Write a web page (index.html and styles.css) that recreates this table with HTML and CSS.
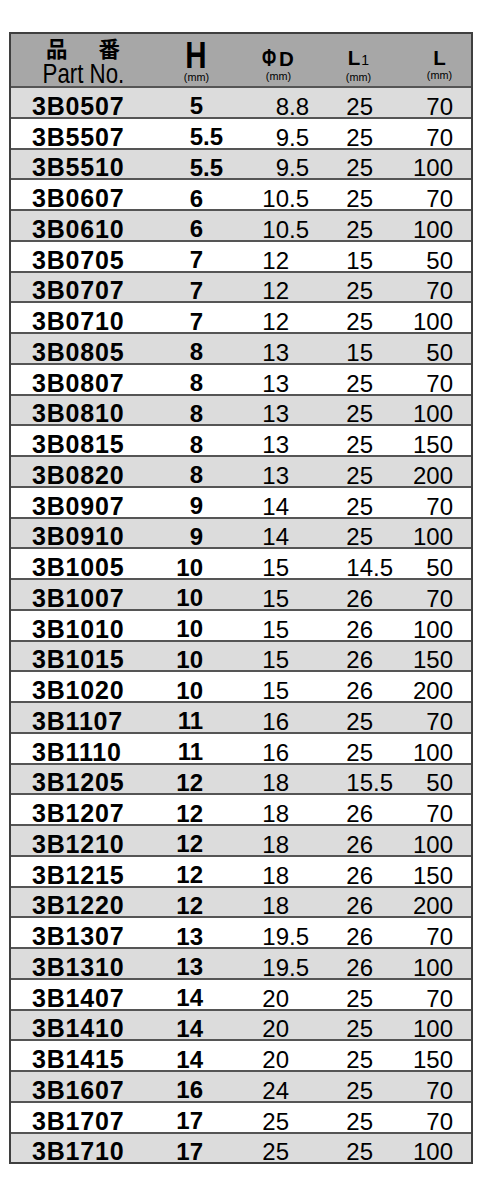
FILE: index.html
```html
<!DOCTYPE html>
<html lang="ja">
<head>
<meta charset="utf-8">
<title>Part list</title>
<link rel="stylesheet" href="styles.css">
</head>
<body>
<div class="sheet">
  <div class="spec">
    <div class="head">
      <div class="hc hc-part">
        <div class="jp"><span>品</span><span>番</span></div>
        <div class="pno">Part No.</div>
      </div>
      <div class="hc hc-h">
        <div class="big">H</div>
        <div class="mm mm-h">(mm)</div>
      </div>
      <div class="hc hc-d">
        <div class="sym"><span class="phi">Φ</span><span class="dd">D</span></div>
        <div class="mm">(mm)</div>
      </div>
      <div class="hc hc-l1">
        <div class="sym">L<span class="sub">1</span></div>
        <div class="mm">(mm)</div>
      </div>
      <div class="hc hc-l">
        <div class="sym">L</div>
        <div class="mm">(mm)</div>
      </div>
    </div>
    <div class="rows">
      <div class="row"><span class="pn">3B0507</span><span class="hi">5</span><span class="hf"></span><span class="vi">8</span><span class="vf">.8</span><span class="vi">25</span><span class="vf"></span><span class="vl">70</span></div>
      <div class="row"><span class="pn">3B5507</span><span class="hi">5</span><span class="hf">.5</span><span class="vi">9</span><span class="vf">.5</span><span class="vi">25</span><span class="vf"></span><span class="vl">70</span></div>
      <div class="row"><span class="pn">3B5510</span><span class="hi">5</span><span class="hf">.5</span><span class="vi">9</span><span class="vf">.5</span><span class="vi">25</span><span class="vf"></span><span class="vl">100</span></div>
      <div class="row"><span class="pn">3B0607</span><span class="hi">6</span><span class="hf"></span><span class="vi">10</span><span class="vf">.5</span><span class="vi">25</span><span class="vf"></span><span class="vl">70</span></div>
      <div class="row"><span class="pn">3B0610</span><span class="hi">6</span><span class="hf"></span><span class="vi">10</span><span class="vf">.5</span><span class="vi">25</span><span class="vf"></span><span class="vl">100</span></div>
      <div class="row"><span class="pn">3B0705</span><span class="hi">7</span><span class="hf"></span><span class="vi">12</span><span class="vf"></span><span class="vi">15</span><span class="vf"></span><span class="vl">50</span></div>
      <div class="row"><span class="pn">3B0707</span><span class="hi">7</span><span class="hf"></span><span class="vi">12</span><span class="vf"></span><span class="vi">25</span><span class="vf"></span><span class="vl">70</span></div>
      <div class="row"><span class="pn">3B0710</span><span class="hi">7</span><span class="hf"></span><span class="vi">12</span><span class="vf"></span><span class="vi">25</span><span class="vf"></span><span class="vl">100</span></div>
      <div class="row"><span class="pn">3B0805</span><span class="hi">8</span><span class="hf"></span><span class="vi">13</span><span class="vf"></span><span class="vi">15</span><span class="vf"></span><span class="vl">50</span></div>
      <div class="row"><span class="pn">3B0807</span><span class="hi">8</span><span class="hf"></span><span class="vi">13</span><span class="vf"></span><span class="vi">25</span><span class="vf"></span><span class="vl">70</span></div>
      <div class="row"><span class="pn">3B0810</span><span class="hi">8</span><span class="hf"></span><span class="vi">13</span><span class="vf"></span><span class="vi">25</span><span class="vf"></span><span class="vl">100</span></div>
      <div class="row"><span class="pn">3B0815</span><span class="hi">8</span><span class="hf"></span><span class="vi">13</span><span class="vf"></span><span class="vi">25</span><span class="vf"></span><span class="vl">150</span></div>
      <div class="row"><span class="pn">3B0820</span><span class="hi">8</span><span class="hf"></span><span class="vi">13</span><span class="vf"></span><span class="vi">25</span><span class="vf"></span><span class="vl">200</span></div>
      <div class="row"><span class="pn">3B0907</span><span class="hi">9</span><span class="hf"></span><span class="vi">14</span><span class="vf"></span><span class="vi">25</span><span class="vf"></span><span class="vl">70</span></div>
      <div class="row"><span class="pn">3B0910</span><span class="hi">9</span><span class="hf"></span><span class="vi">14</span><span class="vf"></span><span class="vi">25</span><span class="vf"></span><span class="vl">100</span></div>
      <div class="row"><span class="pn">3B1005</span><span class="hi">10</span><span class="hf"></span><span class="vi">15</span><span class="vf"></span><span class="vi">14</span><span class="vf">.5</span><span class="vl">50</span></div>
      <div class="row"><span class="pn">3B1007</span><span class="hi">10</span><span class="hf"></span><span class="vi">15</span><span class="vf"></span><span class="vi">26</span><span class="vf"></span><span class="vl">70</span></div>
      <div class="row"><span class="pn">3B1010</span><span class="hi">10</span><span class="hf"></span><span class="vi">15</span><span class="vf"></span><span class="vi">26</span><span class="vf"></span><span class="vl">100</span></div>
      <div class="row"><span class="pn">3B1015</span><span class="hi">10</span><span class="hf"></span><span class="vi">15</span><span class="vf"></span><span class="vi">26</span><span class="vf"></span><span class="vl">150</span></div>
      <div class="row"><span class="pn">3B1020</span><span class="hi">10</span><span class="hf"></span><span class="vi">15</span><span class="vf"></span><span class="vi">26</span><span class="vf"></span><span class="vl">200</span></div>
      <div class="row"><span class="pn">3B1107</span><span class="hi">11</span><span class="hf"></span><span class="vi">16</span><span class="vf"></span><span class="vi">25</span><span class="vf"></span><span class="vl">70</span></div>
      <div class="row"><span class="pn">3B1110</span><span class="hi">11</span><span class="hf"></span><span class="vi">16</span><span class="vf"></span><span class="vi">25</span><span class="vf"></span><span class="vl">100</span></div>
      <div class="row"><span class="pn">3B1205</span><span class="hi">12</span><span class="hf"></span><span class="vi">18</span><span class="vf"></span><span class="vi">15</span><span class="vf">.5</span><span class="vl">50</span></div>
      <div class="row"><span class="pn">3B1207</span><span class="hi">12</span><span class="hf"></span><span class="vi">18</span><span class="vf"></span><span class="vi">26</span><span class="vf"></span><span class="vl">70</span></div>
      <div class="row"><span class="pn">3B1210</span><span class="hi">12</span><span class="hf"></span><span class="vi">18</span><span class="vf"></span><span class="vi">26</span><span class="vf"></span><span class="vl">100</span></div>
      <div class="row"><span class="pn">3B1215</span><span class="hi">12</span><span class="hf"></span><span class="vi">18</span><span class="vf"></span><span class="vi">26</span><span class="vf"></span><span class="vl">150</span></div>
      <div class="row"><span class="pn">3B1220</span><span class="hi">12</span><span class="hf"></span><span class="vi">18</span><span class="vf"></span><span class="vi">26</span><span class="vf"></span><span class="vl">200</span></div>
      <div class="row"><span class="pn">3B1307</span><span class="hi">13</span><span class="hf"></span><span class="vi">19</span><span class="vf">.5</span><span class="vi">26</span><span class="vf"></span><span class="vl">70</span></div>
      <div class="row"><span class="pn">3B1310</span><span class="hi">13</span><span class="hf"></span><span class="vi">19</span><span class="vf">.5</span><span class="vi">26</span><span class="vf"></span><span class="vl">100</span></div>
      <div class="row"><span class="pn">3B1407</span><span class="hi">14</span><span class="hf"></span><span class="vi">20</span><span class="vf"></span><span class="vi">25</span><span class="vf"></span><span class="vl">70</span></div>
      <div class="row"><span class="pn">3B1410</span><span class="hi">14</span><span class="hf"></span><span class="vi">20</span><span class="vf"></span><span class="vi">25</span><span class="vf"></span><span class="vl">100</span></div>
      <div class="row"><span class="pn">3B1415</span><span class="hi">14</span><span class="hf"></span><span class="vi">20</span><span class="vf"></span><span class="vi">25</span><span class="vf"></span><span class="vl">150</span></div>
      <div class="row"><span class="pn">3B1607</span><span class="hi">16</span><span class="hf"></span><span class="vi">24</span><span class="vf"></span><span class="vi">25</span><span class="vf"></span><span class="vl">70</span></div>
      <div class="row"><span class="pn">3B1707</span><span class="hi">17</span><span class="hf"></span><span class="vi">25</span><span class="vf"></span><span class="vi">25</span><span class="vf"></span><span class="vl">70</span></div>
      <div class="row"><span class="pn">3B1710</span><span class="hi">17</span><span class="hf"></span><span class="vi">25</span><span class="vf"></span><span class="vi">25</span><span class="vf"></span><span class="vl">100</span></div>
    </div>
  </div>
</div>
</body>
</html>
```
FILE: styles.css
```css
html, body {
  margin: 0;
  padding: 0;
  background: #ffffff;
}

body {
  font-family: "Liberation Sans", Arial, sans-serif;
  color: #000;
}

.sheet {
  padding: 32px 0 0 9px;
}

.spec {
  width: 464px;
  box-sizing: border-box;
  border: 2px solid #3f3f3f;
}

/* ---------- header ---------- */
.head {
  display: grid;
  grid-template-columns: 144px 82px 82px 79px 73px;
  height: 52px;
  background: #a7a7a7;
}

.hc {
  display: flex;
  flex-direction: column;
  align-items: center;
}

.hc-part {
  padding-top: 4px;
}

.jp {
  display: flex;
  gap: 31px;
  font-family: "Noto Sans CJK JP", "Noto Sans CJK SC", sans-serif;
  font-weight: 700;
  font-size: 21.5px;
  line-height: 20px;
}

.pno {
  margin-top: 3.5px;
  font-size: 27.5px;
  line-height: 24px;
  transform: scaleX(0.81);
}

.hc-h {
  padding-top: 9px;
}

.big {
  font-weight: 700;
  font-size: 36px;
  line-height: 26px;
  transform: scaleX(0.82);
}

.mm {
  font-size: 11.5px;
  line-height: 12px;
  margin-top: 0.5px;
  transform: scaleX(0.94);
}

.mm-h {
  margin-top: 2px;
}

.hc-d,
.hc-l1,
.hc-l {
  padding-top: 14px;
}

.hc-l {
  padding-left: 10px;
}

.sym {
  font-weight: 700;
  font-size: 20.5px;
  line-height: 20px;
  display: flex;
  align-items: baseline;
}

.phi {
  display: inline-block;
  font-size: 24px;
  transform: scaleX(0.72);
  transform-origin: left center;
  margin-right: -3px;
}

.sub {
  font-size: 14px;
  font-weight: 400;
  margin-left: 1px;
}

/* ---------- body rows ---------- */
.row {
  display: grid;
  grid-template-columns: 139px 53px 37px 49px 31px 53px 27px 53px;
  padding-right: 18px;
  height: 30.75px;
  box-sizing: border-box;
  border-top: 2px solid #555555;
  align-items: end;
  background: #ffffff;
  line-height: 20px;
}

.rows .row:nth-child(odd) {
  background: #dcdcdc;
}

.pn {
  padding-left: 21px;
  padding-bottom: 1px;
  font-weight: 700;
  font-size: 25px;
  letter-spacing: 0.8px;
}

.hi,
.hf {
  font-weight: 700;
  font-size: 24px;
  padding-bottom: 0.5px;
}

.hi {
  text-align: right;
}

.vi,
.vf,
.vl {
  font-size: 24px;
}

.vi,
.vl {
  text-align: right;
}
```
